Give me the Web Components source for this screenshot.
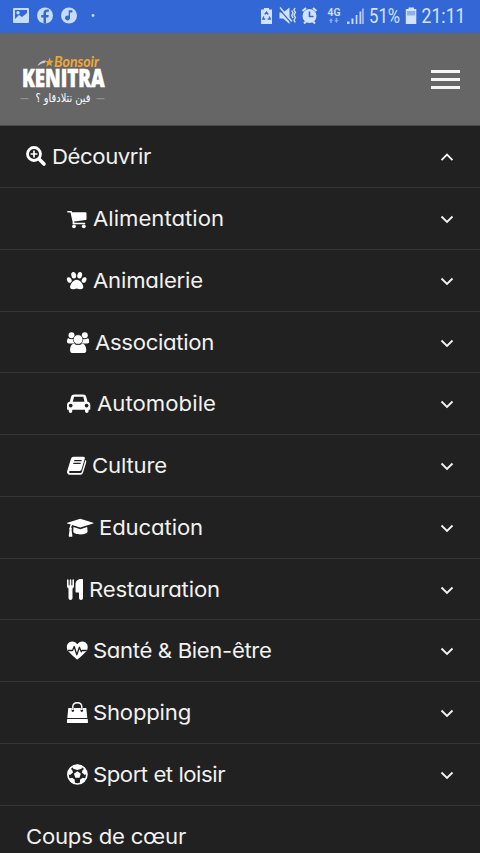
<!DOCTYPE html>
<html lang="fr"><head><meta charset="utf-8"><title>Bonsoir Kenitra</title>
<style>html,body{margin:0;background:#212121}body{width:480px;height:853px;overflow:hidden}</style></head>
<body>
<app-screen>
<status-bar></status-bar>
<site-header></site-header>
<menu-row icon="search" top open gap="25.5" fit="99">Découvrir</menu-row>
<menu-row icon="cart" gap="26" fit="131">Alimentation</menu-row>
<menu-row icon="paw" gap="26" fit="110">Animalerie</menu-row>
<menu-row icon="users" gap="28.5" fit="119">Association</menu-row>
<menu-row icon="car" gap="30" fit="119">Automobile</menu-row>
<menu-row icon="book" gap="25.5" fit="75">Culture</menu-row>
<menu-row icon="grad" gap="32.5" fit="104">Education</menu-row>
<menu-row icon="food" gap="22.5" fit="131">Restauration</menu-row>
<menu-row icon="heart" gap="26.5" fit="178.5">Santé &amp; Bien-être</menu-row>
<menu-row icon="bag" gap="26.5" fit="98">Shopping</menu-row>
<menu-row icon="ball" gap="26.5" fit="132">Sport et loisir</menu-row>
<menu-row top leaf gap="0" fit="160">Coups de cœur</menu-row>
</app-screen>
<script>
const ICONS = {
search:'<g fill="none" stroke="#fff"><circle cx="8" cy="10" r="6.5" stroke-width="2.8"/><path d="M13 15l5 5" stroke-width="3.6" stroke-linecap="round"/><path d="M8 6.6v6.8M4.600 10h6.800" stroke-width="1.700"/></g>',
cart:'<path d="M.8 5h3.300c.6 0 .9.500 1 1.300h13.500c.6 0 .9.400.9.900v6c0 .5-.3.800-.8.900l-11.600 1.300.3 1.400h10.300c.8 0 .8 1.500 0 1.500H6.500c-.6 0-1-.4-1-.9l.2-1.100L3.500 6.600H.8C-.2 6.600-.2 5 .8 5z"/><circle cx="7" cy="20.300" r="1.900"/><circle cx="16.800" cy="20.300" r="1.900"/>',
paw:'<ellipse cx="6.700" cy="7.200" rx="2.400" ry="3.300" transform="rotate(-12 6.700 7.200)"/><ellipse cx="12.700" cy="7.200" rx="2.400" ry="3.300" transform="rotate(12 12.700 7.200)"/><ellipse cx="2.300" cy="12" rx="2.200" ry="2.900" transform="rotate(-25 2.300 12)"/><ellipse cx="17.100" cy="12" rx="2.200" ry="2.900" transform="rotate(25 17.100 12)"/><path d="M9.700 11.800c3.200 0 6.600 4.500 6.600 7.300 0 1.700-1.300 2.200-2.700 2.200-1.500 0-2.500-.9-3.900-.9s-2.300.9-3.800.9c-1.700 0-2.800-.5-2.800-2.200 0-2.800 3.400-7.300 6.600-7.300z"/>',
users:'<circle cx="4.500" cy="5.200" r="3"/><circle cx="17.800" cy="5.200" r="3"/><path d="M1.500 8.300c1.500 1 4 1.200 5.500.2-.2 2.200.1 3.700 1.100 5H2C.7 13.500 0 12.800 0 11.600c0-1.500.4-3.300 1.500-3.300zM20.700 8.300c-1.500 1-4 1.200-5.500.2.2 2.200-.1 3.700-1.100 5h6.100c1.300 0 2-.7 2-1.900 0-1.500-.4-3.300-1.500-3.300z"/><path d="M7 13.700c2.500 1.800 5.800 1.800 8.300 0 2.600.1 4 3.200 4 6.500 0 2-1.200 2.800-2.800 2.800H6c-1.800 0-2.900-.8-2.900-2.800 0-3.300 1.300-6.400 3.900-6.500z"/><circle cx="11.100" cy="9.500" r="4.800" stroke="#212121" stroke-width=".7"/>',
car:'<path fill-rule="evenodd" d="M7.300 3.500h8.700c1.800 0 2.800.8 3.200 2.300l1.300 5c1.700.2 2.800 1.400 2.800 3.100v4.200c0 .4-.2.600-.6.600h-1.100v1.400c0 2.500-3.600 2.500-3.600 0v-1.400H5.300v1.400c0 2.500-3.600 2.500-3.600 0v-1.400H.6c-.4 0-.6-.2-.6-.6v-4.200c0-1.700 1.100-2.900 2.800-3.100l1.300-5c.4-1.500 1.500-2.300 3.200-2.300zM6.900 6.300l-1.100 4.500h11.700l-1.100-4.500c-.1-.4-.3-.5-.7-.5H7.600c-.4 0-.6.1-.7.500zM3.700 12.700a1.900 1.900 0 100 3.800 1.900 1.900 0 000-3.800zm15.900 0a1.900 1.900 0 100 3.800 1.900 1.900 0 000-3.800z"/>',
book:'<path fill-rule="evenodd" d="M6.700 3.700h9.800c1.100 0 1.600.8 1.300 1.800l-3.300 11c-.3 1-.9 1.400-1.900 1.400H3c-1.200 0-1.200 2.100.2 2.100h10.200c.7 0 1.200-.3 1.400-1l3.500-11.900c1 .5 1.200 1.100.9 2.100l-3.200 10.500c-.4 1.300-1.300 2-2.600 2H3c-2.100 0-3.500-2-2.800-3.800L3.900 6C4.500 4.400 5.200 3.700 6.700 3.700zM7.400 7l-.4 1.300h7.400l.4-1.300zM6.500 9.800l-.4 1.300h7.400l.4-1.300z"/>',
grad:'<path d="M13.300 3.700l12.800 4c.7.200.7.700 0 .9l-12.800 4c-3.500-1-6.500-2-8-2.500-.7.600-1 1.500-1 2.600.8.500.9 1.300.2 1.900l.9 6.500c0 .4-.2.600-.5.600H2.200c-.3 0-.5-.2-.5-.6l.9-6.500c-.7-.6-.7-1.500.2-2 .1-1.200.4-2.200 1-3L.4 8.600c-.6-.2-.6-.7 0-.9z"/><path d="M6.500 12l6.800 2.200L20.200 12l.4 4.300c0 4.200-14.400 4.200-14.400 0z"/>',
food:'<path d="M0 3.300c0-1.500 1.600-1.500 1.600 0v4.500c0 1 1.100 1 1.100 0V3.300c0-1.500 1.600-1.500 1.600 0v4.500c0 1 1.100 1 1.100 0V3.300C5.400 1.800 7 1.800 7 3.300v6c0 1-.6 1.800-1.500 2.200V21c0 2.600-4 2.600-4 0v-9.500C.6 11.100 0 10.300 0 9.300zM16 2.700V21c0 2.600-4 2.600-4 0v-5.500H9.200c-.5 0-.7-.3-.7-.7V7.500c0-3 2.200-5.400 5.200-5.400h1.700c.4 0 .6.200.6.600z"/>',
heart:'<path d="M10.300 21.500c-.5 0-9.200-8-9.700-9C-1.400 8 .8 3.600 5.200 3.600c2.300 0 3.900 1.200 5.100 2.700 1.200-1.500 2.800-2.700 5.100-2.700 4.400 0 6.600 4.400 4.600 8.900-.5 1-9.200 9-9.700 9z"/><path d="M1 12.500h4.500l1.700-4 2.600 8.300 2.600-7.600 1.900 4.600.7-1.300h4.800" fill="none" stroke="#212121" stroke-width="1.300" stroke-linejoin="round"/>',
bag:'<path d="M1.300 8.100h3.500v1.700a1.300 1.300 0 102 0V8.100h7v1.700a1.300 1.300 0 102 0V8.100h3.500l1 9.800H.3zM.2 18.900h20.500l.3 2.800c.1.800-.3 1.300-1 1.300H.9c-.7 0-1.100-.5-1-1.300z"/><path d="M5.800 10V6.800c0-5.500 9-5.500 9 0V10" fill="none" stroke="#fff" stroke-width="1.400"/>',
ball:'<circle cx="10.400" cy="12.500" r="9.500" fill="#212121" stroke="#fff" stroke-width="1.700"/><path d="M10.400 9.200l3.400 2.500-1.300 4H8.300l-1.300-4z"/><path d="M5.500 4.200l4.900-1.700 4.900 1.700-.8 2.600-4.100 1.300-4.100-1.300zM.8 11.800l1.700-5.400 2.600 1.400.9 2.600-3 2.500zM20 11.800l-1.700-5.400-2.600 1.400-.9 2.600 3 2.500zM4.300 20.500L2 16.500l3-.7 2.700 1.600.2 4.800zM16.500 20.500l2.300-4-3-.7-2.700 1.600-.2 4.800z"/>'
};
function shadow(el, html){ el.attachShadow({mode:'open'}).innerHTML = html; }

customElements.define('app-screen', class extends HTMLElement{
  constructor(){ super(); shadow(this, `<style>:host{display:flex;flex-direction:column;width:480px;height:853px;overflow:hidden;background:#212121}::slotted(*){flex:none}</style><slot></slot>`); }
});

customElements.define('status-bar', class extends HTMLElement{
  constructor(){ super(); shadow(this, `<style>:host{display:flex;justify-content:space-between;height:32.500px;background:#3367d6}svg{display:block;font-family:Roboto,sans-serif}</style>
<svg width="110" height="32" fill="#c6dcff"><path fill-rule="evenodd" d="M14 8h14a1 1 0 011 1v13a1 1 0 01-1 1H14a1 1 0 01-1-1V9a1 1 0 011-1zm1 2v9l4-4 3 2 5-4v-3zm3 1a1.700 1.700 0 110 3.400 1.700 1.700 0 010-3.400z"/>
<circle cx="45" cy="15.500" r="8"/><path d="M43.500 23.500v-6h-2.300V15h2.300v-1.800c0-2.500 1.500-3.700 3.700-3.700h1.600v2.300h-1.300c-1.100 0-1.500.6-1.500 1.500V15h2.700l-.4 2.500H46v6z" fill="#3367d6"/>
<circle cx="69" cy="15.500" r="8"/><path d="M68.700 10.300h3.700v2.300H70v5.200a2.500 2.500 0 11-1.300-2z" fill="#3367d6"/><circle cx="93" cy="15.500" r="1.400"/></svg>
<svg width="230" height="32" viewBox="250 0 230 32" fill="#d3e3ff">
<path d="M264 8h5v1.500h3V24h-11V9.500h3z"/><path d="M264.800 14.500l1.700-2.300 1.700 2.300M263.800 16.500l-1 2.500h2.500M269.200 16.500l1 2.500h-2.500" fill="none" stroke="#3367d6" stroke-width="1.400"/>
<path d="M279.500 12.500h3.700l6.300-5V24l-6.300-5.500h-3.700z"/><path d="M279 9l13 14.500" stroke="#3367d6" stroke-width="1.200"/><path d="M280 7.500l12 14" stroke="#d3e3ff" stroke-width="1.500"/><path d="M291.700 10.500l1.300 2.500-1.300 2.500 1.300 2.500M295 8l-1 2 1.400 2.500-1.400 2.500 1.400 2.500-1.400 2.500 1.200 2.500" fill="none" stroke="#d3e3ff" stroke-width="1.400"/>
<circle cx="309.500" cy="16" r="7"/><path d="M302.500 11l3.500-3M316.500 11l-3.500-3M304 23.500l2-2M315 23.500l-2-2" stroke="#d3e3ff" stroke-width="2"/><path d="M309.500 11.500v5h4" fill="none" stroke="#3367d6" stroke-width="1.600"/>
<text x="327.500" y="15.500" font-size="10.500" font-weight="600" textLength="13" lengthAdjust="spacingAndGlyphs">4G</text><path d="M329 21l2-3 2 3h-1.200v2h-1.600v-2zM334.500 20l2 3 2-3h-1.200v-2h-1.600v2z" fill="#86adf2"/>
<path d="M347 21.500h2.500V24H347zM351.500 18.500h2V24h-2zM355.700 15h1.700v9h-1.700zM359.500 11.500h1.800V24h-1.800zM362.300 8.500h1.300V24h-1.300z" opacity=".9"/>
<text x="369" y="23" font-size="20" textLength="31" lengthAdjust="spacingAndGlyphs">51%</text>
<path d="M408.500 7.500h5.500V9h2.300v15h-10.500V9h2.700z"/><path d="M407 11h8.200v4.500H407z" fill="#8fb0ed"/>
<text x="421.500" y="23" font-size="20" textLength="44" lengthAdjust="spacingAndGlyphs">21:11</text></svg>`); }
});

customElements.define('site-header', class extends HTMLElement{
  constructor(){ super(); shadow(this, `<style>:host{display:flex;justify-content:space-between;align-items:center;box-sizing:border-box;height:93px;padding:0 20px 0 18px;background:#666;border-bottom:1px solid #4a4a4a}.burger{display:flex;flex-direction:column;gap:5.500px;width:29.500px;padding-top:2px}.burger i{height:2.600px;background:#f4f4f4}svg{display:block;overflow:visible}</style>
<svg width="92" height="58" viewBox="18 50 92 58"><path d="M37.500 66c1.500-3.500 4-5.500 8.500-5.500l-1.300 2.500c-2.500 0-4.500 1-7.200 3z" fill="#ccc"/><path d="M49.500 57.300l1 3.200 3.500.4-2.800 2 .8 3.600-2.600-2-3.200 2.200 1.100-3.600-2.400-2.100h3.400z" fill="#eea22e"/>
<text x="54" y="66.500" font-family="Lato,sans-serif" font-style="italic" font-weight="700" font-size="16" fill="#eea83a" textLength="45" lengthAdjust="spacingAndGlyphs">Bonsoir</text>
<text x="22" y="86.500" font-family="Open Sans,sans-serif" font-weight="800" font-size="24" fill="#fff" stroke="#fff" stroke-width=".6" textLength="82.500" lengthAdjust="spacingAndGlyphs">KENITRA</text>
<path d="M20.500 98.700h8M96.500 98.700h8" stroke="#999"/>
<text x="63" y="102" direction="rtl" text-anchor="middle" font-family="DejaVu Sans,sans-serif" font-size="11.500" fill="#fff" textLength="55" lengthAdjust="spacingAndGlyphs">فين نتلادقاو ؟</text></svg>
<div class="burger"><i></i><i></i><i></i></div>`); }
});

customElements.define('menu-row', class extends HTMLElement{
  constructor(){ super();
    const top = this.hasAttribute('top'), leaf = this.hasAttribute('leaf'), icon = this.getAttribute('icon');
    shadow(this, `<style>:host{display:flex;align-items:center;box-sizing:border-box;height:61.770px;padding:1.500px 26px 0 ${top?26:66.6}px;border-bottom:1px solid #343434;color:#f2f2f2;font:380 20.500px/30px Inter,sans-serif;font-feature-settings:"cv11"}
:host([open]){height:62.500px}
.icon{flex:none;width:${this.getAttribute('gap')}px;height:24px;padding-bottom:2px}.icon svg{display:block;overflow:visible}.label{white-space:nowrap;flex:none;transform:scaleX(1.080);transform-origin:0 50%}.chevron{margin-left:auto;display:block;flex:none}</style>
<div class="icon">${icon?`<svg width="24" height="24" fill="#fff">${ICONS[icon]}</svg>`:''}</div><span class="label"><slot></slot></span>
${leaf?'':`<svg class="chevron" width="14" height="14" fill="none" stroke="#f2f2f2" stroke-width="1.900"><path d="${this.hasAttribute('open')?'M1.500 10.200L7 4.700l5.500 5.500':'M1.500 4.500L7 10l5.500-5.500'}"/></svg>`}`);
  }
  connectedCallback(){
    // Distribute the difference between natural and desired label width over the letters.
    const label = this.shadowRoot.querySelector('.label');
    const n = this.textContent.length;
    label.style.letterSpacing = ((+this.getAttribute('fit') - label.getBoundingClientRect().width) / 1.08 / n) + 'px';
  }
});
</script>
</body></html>
